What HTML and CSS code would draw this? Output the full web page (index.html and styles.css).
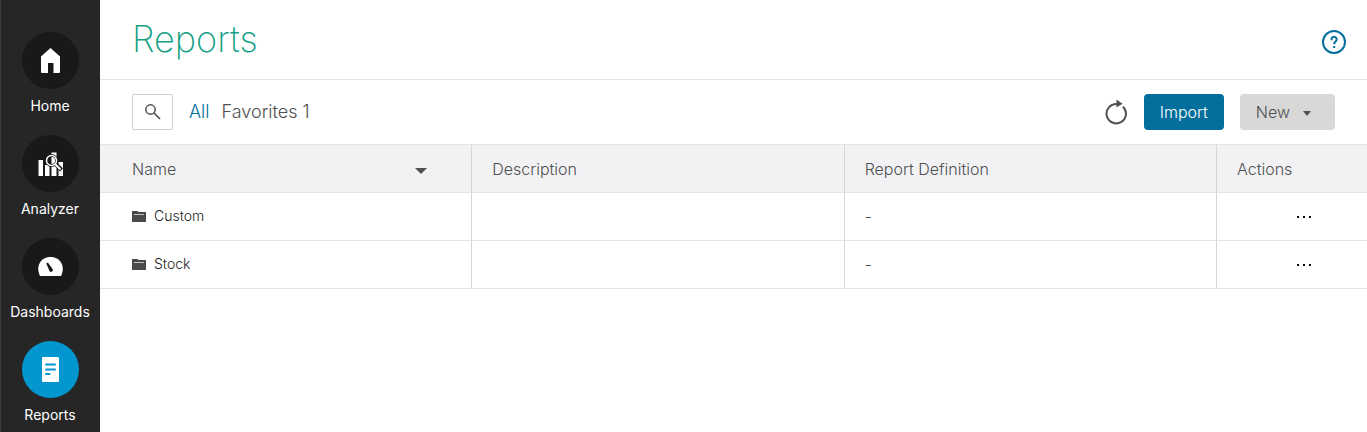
FILE: index.html
```html
<!DOCTYPE html>
<html lang="en">
<head>
    <meta charset="UTF-8">
    <meta name="viewport" content="width=device-width, initial-scale=1.0">
    <title>Reports</title>
    <link rel="stylesheet" href="styles.css">
</head>
<body>

    <nav class="sidebar">
        <a class="nav-item" href="#home">
            <span class="nav-icon">
                <svg width="57" height="57" viewBox="0 0 57 57">
                    <path fill="#fff" d="M28.5 16 L38 24.5 V40 Q38 41 37 41 H31.5 V31 H26 V41 H20 Q19 41 19 40 V24.5 Z"/>
                </svg>
            </span>
            <span>Home</span>
        </a>
        <a class="nav-item" href="#analyzer">
            <span class="nav-icon">
                <svg width="57" height="57" viewBox="0 0 57 57">
                    <path fill="#fff" d="M16.5 25h4.500v16h-4.500z M23 30h4.500v11h-4.500z M29.500 17.500h5v23.500h-5z M36.500 27h4.500v14h-4.500z"/>
                    <path stroke="#191919" stroke-width="4" d="M33 28.500 L39.500 35"/>
                    <circle cx="29.500" cy="25.500" r="6.500" fill="#191919"/>
                    <circle cx="29.500" cy="25.500" r="5" fill="none" stroke="#fff" stroke-width="1.500"/>
                    <path fill="#fff" d="M29.500 22a3.500 3.500 0 0 1 0 7z"/>
                    <path stroke="#fff" stroke-width="2" d="M33 29 L38.500 34.500"/>
                </svg>
            </span>
            <span>Analyzer</span>
        </a>
        <a class="nav-item" href="#dashboards">
            <span class="nav-icon">
                <svg width="57" height="57" viewBox="0 0 57 57">
                    <path fill="#fff" d="M18 38 C13.500 29 18 19 28.500 19 S43.500 29 39 38 Z"/>
                    <path fill="#191919" d="M24.300 25.500 L25.800 24.500 L30.600 31 A1.800 1.800 0 0 1 27.500 33 Z"/>
                </svg>
            </span>
            <span>Dashboards</span>
        </a>
        <a class="nav-item active" href="#reports">
            <span class="nav-icon">
                <svg width="57" height="57" viewBox="0 0 57 57">
                    <rect x="20" y="16" width="17" height="25" rx="1" fill="#fff"/>
                    <path stroke="#0496cf" stroke-width="2" stroke-linecap="round" d="M24 23.500h9 M24 28.500h9 M24 33h3.500"/>
                </svg>
            </span>
            <span>Reports</span>
        </a>
    </nav>

    <main class="content">
        <header class="page-header">
            <h1>Reports</h1>
            <button class="icon-button" type="button" aria-label="Help">
                <svg width="26" height="26" viewBox="0 0 26 26" fill="none" stroke="#046f9c">
                    <circle cx="13" cy="13" r="11" stroke-width="2"/>
                    <path stroke-width="2" d="M10.500 11.200 V10.500 A2.600 2.600 0 1 1 14.500 12.600 Q13.200 13.400 13.200 15.300"/>
                    <path stroke-width="2" d="M12.200 18h2"/>
                </svg>
            </button>
        </header>

        <div class="toolbar">
            <button class="search-button" type="button" aria-label="Search">
                <svg width="18" height="18" viewBox="0 0 18 18" fill="none" stroke="#4f5051">
                    <circle cx="6.500" cy="6.500" r="4.700" stroke-width="1.500"/>
                    <path stroke-width="1.700" d="M10 10 L16 16"/>
                </svg>
            </button>
            <a class="filter selected" href="#all">All</a>
            <a class="filter" href="#favorites">Favorites 1</a>

            <div class="toolbar-actions">
                <button class="icon-button" type="button" aria-label="Refresh">
                    <svg width="24" height="26" viewBox="0 0 24 26">
                        <path fill="none" stroke="#4f5051" stroke-width="2" d="M13 5 A9.700 9.700 0 1 0 19 7.700"/>
                        <path fill="#4f5051" d="M12.500 0.500 L18.500 4.700 L12.500 8.500 Z"/>
                    </svg>
                </button>
                <button class="btn btn-import" type="button">Import</button>
                <button class="btn btn-new" type="button">New <span class="caret"></span></button>
            </div>
        </div>

        <table class="reports">
            <thead>
                <tr>
                    <th scope="col"><div class="sort">Name <span class="sort-arrow"></span></div></th>
                    <th scope="col">Description</th>
                    <th scope="col">Report Definition</th>
                    <th scope="col" class="col-actions">Actions</th>
                </tr>
            </thead>
            <tbody>
                <tr>
                    <td>
                        <a class="folder" href="#custom">
                            <svg width="14" height="12" viewBox="0 0 14 12"><path fill="#4a4a4a" d="M0 0h5.500l1 1H14v10H0z"/><path fill="#c4c4c4" d="M2 3h10v1H2z"/></svg>
                            Custom
                        </a>
                    </td>
                    <td></td>
                    <td>-</td>
                    <td class="more-cell">
                        <button class="more" type="button" aria-label="Actions for Custom"><svg width="16" height="2" viewBox="0 0 16 2"><path d="M1 0h2v2H1z M7 0h2v2H7z M13 0h2v2h-2z"/></svg></button>
                    </td>
                </tr>
                <tr>
                    <td>
                        <a class="folder" href="#stock">
                            <svg width="14" height="12" viewBox="0 0 14 12"><path fill="#4a4a4a" d="M0 0h5.500l1 1H14v10H0z"/><path fill="#c4c4c4" d="M2 3h10v1H2z"/></svg>
                            Stock
                        </a>
                    </td>
                    <td></td>
                    <td>-</td>
                    <td class="more-cell">
                        <button class="more" type="button" aria-label="Actions for Stock"><svg width="16" height="2" viewBox="0 0 16 2"><path d="M1 0h2v2H1z M7 0h2v2H7z M13 0h2v2h-2z"/></svg></button>
                    </td>
                </tr>
            </tbody>
        </table>
    </main>

</body>
</html>
```

FILE: styles.css
```css
* {
    box-sizing: border-box;
}
body {
    display: flex;
    min-height: 100vh;
    margin: 0;
    font-family: Inter, "Liberation Sans", sans-serif;
    font-size: 16px;
    font-weight: 300;
    color: #4f5051;
    background: #fff;
}
a {
    color: inherit;
    text-decoration: none;
}
button {
    padding: 0;
    border: none;
    background: none;
    font: inherit;
    color: inherit;
    cursor: pointer;
}
svg {
    display: block;
}

/* sidebar */
.sidebar {
    flex: none;
    width: 100px;
    padding-top: 32px;
    background: #262626;
    box-shadow: inset 1px 0 #3c3c3c;
}
.nav-item {
    display: flex;
    flex-direction: column;
    align-items: center;
    gap: 7px;
    margin-bottom: 19px;
    font-size: 14px;
    font-weight: 400;
    line-height: 20px;
    color: #fff;
}
.nav-item:last-child {
    margin-bottom: 0;
}
.nav-icon {
    border-radius: 50%;
    background: #191919;
}
.active .nav-icon {
    background: #0496cf;
}

/* header and toolbar */
.content {
    flex: 1;
    min-width: 0;
}
.page-header {
    display: flex;
    justify-content: space-between;
    align-items: center;
    height: 80px;
    padding: 0 20px 0 32px;
    border-bottom: 1px solid #e4e4e6;
}
.page-header .icon-button {
    padding-top: 4px;
}
h1 {
    margin: 0;
    padding-bottom: 2px;
    font-size: 36px;
    font-weight: 200;
    color: #14a085;
}
.toolbar {
    display: flex;
    align-items: center;
    height: 65px;
    padding: 0 32px;
    border-bottom: 1px solid #e4e4e6;
}
.search-button {
    display: flex;
    align-items: center;
    justify-content: center;
    width: 41px;
    height: 36px;
    margin-right: 16px;
    border: 1px solid #cfcfd1;
    border-radius: 2px;
}
.filter {
    margin-right: 12px;
    padding-bottom: 2px;
    font-size: 18px;
}
.filter.selected {
    color: #046f9c;
}
.toolbar-actions {
    display: flex;
    align-items: center;
    gap: 16px;
    margin-left: auto;
}
.btn {
    height: 36px;
    padding: 0 16px;
    border-radius: 4px;
}
.btn-import {
    background: #046f9c;
    color: #fff;
}
.btn-new {
    display: flex;
    align-items: center;
    gap: 13px;
    padding-right: 24px;
    background: #d8d8d8;
}
.caret {
    margin-top: 2px;
    border: 4px solid transparent;
    border-top: 5px solid #4f5051;
    border-bottom: 0;
}

/* table */
.reports {
    width: 100%;
    table-layout: fixed;
    border-collapse: separate;
    border-spacing: 0;
}
.reports th,
.reports td {
    height: 48px;
    padding: 0 20px;
    border-right: 1px solid #d6d6d9;
    border-bottom: 1px solid #e4e4e6;
    text-align: left;
}
.reports th {
    font-weight: 300;
    background: #f2f2f4;
}
.reports td {
    padding-bottom: 2px;
}
.reports th:first-child,
.reports td:first-child {
    padding-left: 32px;
}
.reports th:last-child,
.reports td:last-child {
    border-right: none;
}
.reports .col-actions {
    width: 150px;
}
.sort {
    display: flex;
    align-items: center;
    justify-content: space-between;
    padding-right: 24px;
}
.sort-arrow {
    margin-top: 4px;
    border: 6px solid transparent;
    border-top-color: #4f5051;
    border-bottom: 0;
}
.folder {
    display: flex;
    align-items: center;
    gap: 8px;
    font-size: 14px;
    color: #1c1c1c;
}
.folder svg {
    margin-top: 2px;
}
.more {
    display: block;
    margin-left: auto;
    padding: 10px 0 8px;
}
.reports .more-cell {
    padding-right: 55px;
}
```
